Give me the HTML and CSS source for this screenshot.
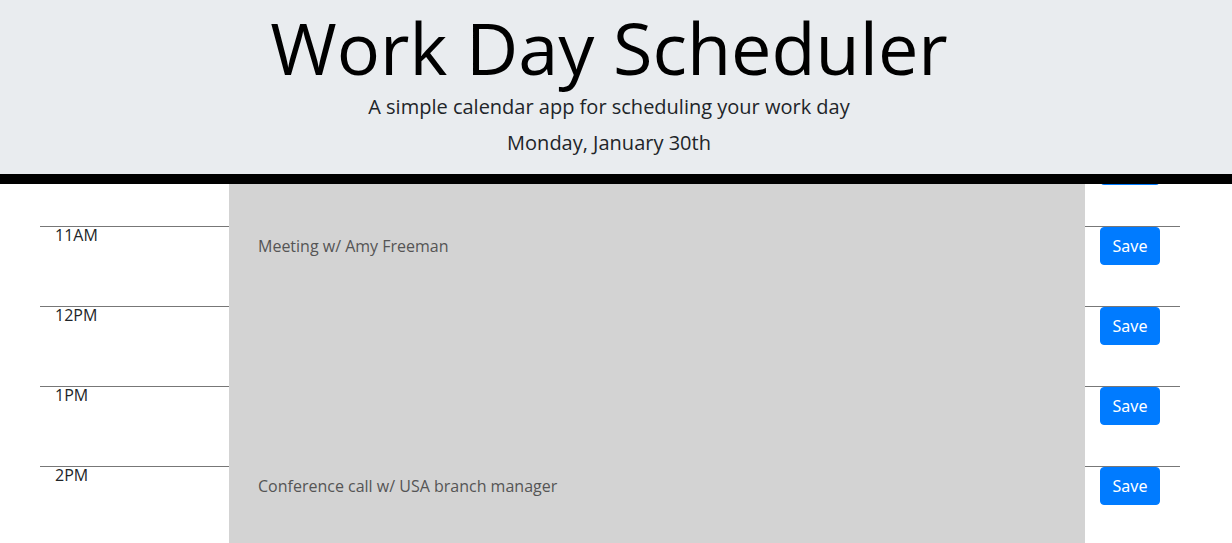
FILE: index.html
```html
<!DOCTYPE html>
<html lang="en">
<head>
<meta charset="utf-8">
<title>Work Day Scheduler</title>
<link rel="stylesheet" href="styles.css">
</head>
<body>
<header class="jumbotron">
  <h1 class="title">Work Day Scheduler</h1>
  <p class="lead">A simple calendar app for scheduling your work day</p>
  <p class="lead date">Monday, January 30th</p>
</header>
<main class="viewport">
  <div class="container">
    <div class="time-block">
      <div class="hour">10AM</div>
      <textarea class="description"></textarea>
      <div class="save-col"><button class="save-btn">Save</button></div>
    </div>
    <div class="time-block">
      <div class="hour">11AM</div>
      <textarea class="description">Meeting w/ Amy Freeman</textarea>
      <div class="save-col"><button class="save-btn">Save</button></div>
    </div>
    <div class="time-block">
      <div class="hour">12PM</div>
      <textarea class="description"></textarea>
      <div class="save-col"><button class="save-btn">Save</button></div>
    </div>
    <div class="time-block">
      <div class="hour">1PM</div>
      <textarea class="description"></textarea>
      <div class="save-col"><button class="save-btn">Save</button></div>
    </div>
    <div class="time-block">
      <div class="hour">2PM</div>
      <textarea class="description">Conference call w/ USA branch manager</textarea>
      <div class="save-col"><button class="save-btn">Save</button></div>
    </div>
    <div class="time-block">
      <div class="hour">3PM</div>
      <textarea class="description"></textarea>
      <div class="save-col"><button class="save-btn">Save</button></div>
    </div>
  </div>
</main>
</body>
</html>
```
FILE: styles.css
```css
* {
  box-sizing: border-box;
}

html, body {
  margin: 0;
  padding: 0;
  background: #ffffff;
  font-family: "Open Sans", "Noto Sans", sans-serif;
  color: #212529;
  overflow: hidden;
}

.jumbotron {
  height: 184px;
  background: #e9ecef;
  border-bottom: 10px solid #000000;
  display: flex;
  flex-direction: column;
  align-items: center;
  padding-top: 4px;
  padding-right: 14px;
}

.title {
  margin: 0;
  font-size: 72px;
  font-weight: 400;
  line-height: 86px;
  color: #000000;
}

.lead {
  margin: 2px 0 0;
  font-size: 20px;
  font-weight: 400;
  line-height: 30px;
  color: #212529;
}

.date {
  margin-top: 6px;
}

.viewport {
  height: 359px;
  overflow: hidden;
}

.container {
  width: 1140px;
  margin-left: 40px;
  margin-top: -38px;
}

.time-block {
  display: grid;
  grid-template-columns: 189px 856px 95px;
  height: 80px;
}

.hour {
  border-top: 1px solid #777777;
  padding-left: 15px;
  font-size: 16px;
  line-height: 16px;
  color: #212529;
}

.description {
  display: block;
  width: 100%;
  height: 80px;
  margin: 0;
  border: none;
  resize: none;
  background: #d3d3d3;
  color: #555555;
  font-family: "Open Sans", "Noto Sans", sans-serif;
  font-size: 16px;
  line-height: 24px;
  padding: 8px 20px 0 29px;
  overflow: hidden;
}

.save-col {
  border-top: 1px solid #777777;
  padding-left: 15px;
}

.save-btn {
  display: block;
  width: 60px;
  height: 38px;
  border: 1px solid #007bff;
  border-radius: 4px;
  background: #007bff;
  color: #ffffff;
  font-family: "Noto Sans", "Open Sans", sans-serif;
  font-size: 16px;
  line-height: 24px;
  padding: 0;
  cursor: pointer;
}
```
